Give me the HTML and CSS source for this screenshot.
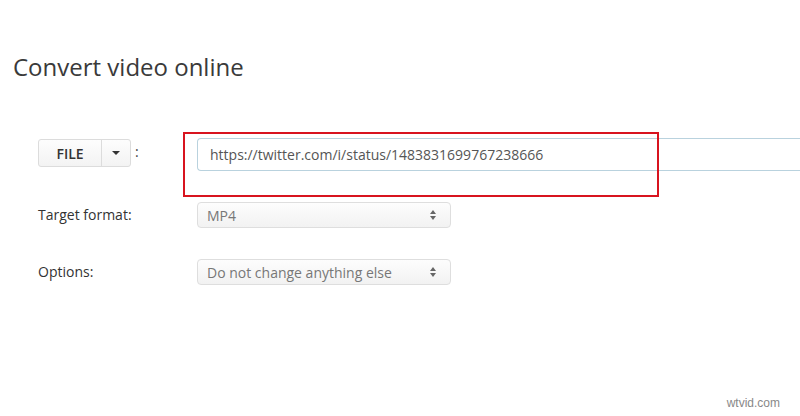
FILE: index.html
```html
<!DOCTYPE html>
<html>
<head>
<meta charset="utf-8">
<link rel="stylesheet" href="styles.css">
</head>
<body>
<div class="page">
  <h1 class="title">Convert video online</h1>
  <div class="form">
    <div class="row row-file">
      <div class="label label-file">
        <div class="btn-group">
          <span class="btn btn-main">FILE</span>
          <span class="btn btn-caret"><span class="caret"></span></span>
        </div>
        <span class="colon">:</span>
      </div>
      <div class="field">
        <div class="highlight">
          <div class="url-input">https://twitter.com/i/status/1483831699767238666</div>
        </div>
      </div>
    </div>
    <div class="row row-target">
      <div class="label">Target format:</div>
      <div class="field">
        <div class="select"><span>MP4</span><span class="updown"><span class="up"></span><span class="down"></span></span></div>
      </div>
    </div>
    <div class="row row-options">
      <div class="label">Options:</div>
      <div class="field">
        <div class="select"><span>Do not change anything else</span><span class="updown"><span class="up"></span><span class="down"></span></span></div>
      </div>
    </div>
  </div>
  <div class="watermark">wtvid.com</div>
</div>
</body>
</html>
```

FILE: styles.css
```css
* { box-sizing: border-box; }
html, body { margin: 0; padding: 0; background: #fff; }
body { font-family: "Open Sans", "Liberation Sans", sans-serif; color: #333; width: 800px; height: 416px; overflow: hidden; }
.page { position: relative; width: 800px; height: 416px; padding: 49px 0 0 13px; overflow: hidden; }
.title { margin: 0; font-weight: 400; font-size: 24px; line-height: 36px; color: #3a3a3a; }
.form { margin-top: 46px; padding-left: 25px; }
.row { display: flex; align-items: flex-start; }
.label { width: 159px; flex: none; font-size: 14px; color: #333; }
.label-file { display: flex; align-items: center; padding-top: 8px; }
.btn-group { display: flex; height: 28px; border: 1px solid #dcdcdc; border-radius: 3px; background: linear-gradient(#fdfdfd, #f3f3f3); }
.btn { display: flex; align-items: center; justify-content: center; font-size: 14px; font-weight: 600; color: #333; }
.btn-main { width: 63px; border-right: 1px solid #dcdcdc; }
.btn-caret { width: 28px; }
.caret { width: 0; height: 0; border-left: 4px solid transparent; border-right: 4px solid transparent; border-top: 4px solid #333; }
.colon { margin-left: 4px; font-size: 14px; color: #444; margin-top: -4px; }
.field { flex: 1; min-width: 0; }
.highlight { margin-left: -14px; padding: 7px 0 0 14px; height: 63px; position: relative; }
.highlight::after { content: ""; position: absolute; left: 0; top: 1px; width: 472px; height: 61px; border: 2.5px solid #d8141f; pointer-events: none; }
.url-input { height: 33px; border: 1px solid #b9d2de; border-right: none; border-radius: 4px 0 0 4px; padding: 0 12px; font-size: 14px; line-height: 31px; color: #555; background: #fff; }
.row-file { height: 63px; }
.row-target { margin-top: 8px; }
.row-target .label, .row-options .label { padding-top: 3px; }
.row-options { margin-top: 31px; }
.select { width: 254px; height: 26px; border: 1px solid #dedede; border-radius: 4px; background: linear-gradient(#fdfdfd, #f2f2f2); display: flex; align-items: center; justify-content: space-between; padding: 0 14px 0 9px; font-size: 14px; color: #777; }
.updown { display: flex; flex-direction: column; gap: 2px; }
.up { width: 0; height: 0; border-left: 3.5px solid transparent; border-right: 3.5px solid transparent; border-bottom: 4px solid #666; }
.down { width: 0; height: 0; border-left: 3.5px solid transparent; border-right: 3.5px solid transparent; border-top: 4px solid #666; }
.watermark { position: absolute; right: 20px; bottom: 6px; font-family: "Liberation Sans", sans-serif; font-size: 12px; color: #888; }
```
